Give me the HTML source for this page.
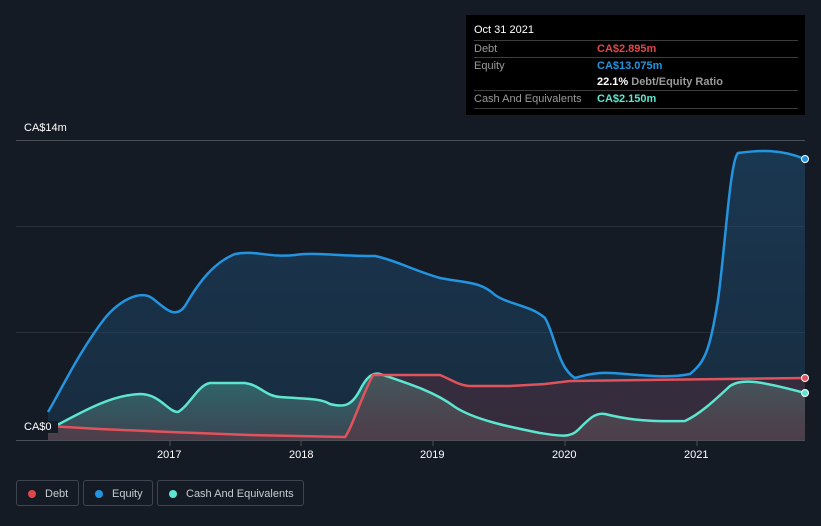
<!DOCTYPE html>
<html><head><meta charset="utf-8"><style>
body{margin:0;background:#151b25;width:821px;height:526px;overflow:hidden;font-family:"Liberation Sans",sans-serif;}
.tt{position:absolute;left:466px;top:15px;width:339px;height:100px;background:#000;}
.tt .h{position:absolute;left:8px;top:9px;color:#fff;font-size:11px;}
.row{position:absolute;left:8px;width:324px;border-top:1px solid #3c3c3c;height:17px;font-size:11px;}
.row span{position:absolute;top:2px;}
.l{left:0;color:#9a9a9a}.v{left:123px;font-weight:bold}
.leg{position:absolute;top:480px;height:26px;border:1px solid #3e4550;border-radius:3px;color:#c8ccd2;font-size:11px;line-height:26px;box-sizing:border-box;}
.leg i{position:absolute;left:11px;top:9px;width:8px;height:8px;border-radius:50%;}
.ax{position:absolute;color:#fff;font-size:11px;}
</style></head><body>
<svg width="821" height="526" style="position:absolute;left:0;top:0">
<defs>
<linearGradient id="ge" x1="0" y1="0" x2="0" y2="1"><stop offset="0" stop-color="#1d4a6e" stop-opacity=".6"/><stop offset="1" stop-color="#1d4a6e" stop-opacity=".35"/></linearGradient>
<linearGradient id="gc" x1="0" y1="0" x2="0" y2="1"><stop offset="0" stop-color="#3fa89a" stop-opacity=".5"/><stop offset="1" stop-color="#777" stop-opacity=".35"/></linearGradient>
</defs>
<line x1="16" y1="140.5" x2="805" y2="140.5" stroke="#4a4f58"/>
<line x1="16" y1="226.5" x2="805" y2="226.5" stroke="#2a2f38"/>
<line x1="16" y1="332.5" x2="805" y2="332.5" stroke="#2a2f38"/>
<path d="M48,412 C60,392 80,350 105,318 C120,300 140,290 152,298 C165,308 175,320 185,306 C200,280 215,262 235,254 C255,250 270,258 295,255 C315,252 335,256 375,256 C395,260 415,271 440,278 C465,283 480,281 495,295 C510,305 530,305 545,318 C555,335 558,368 575,378 C595,372 605,372 625,374 C650,376 670,378 690,374 C705,362 710,350 718,300 C725,250 730,160 738,153 C760,150 780,149 805,159 L805,440 L48,440Z" fill="url(#ge)"/>
<path d="M48,430 C80,413 110,395 140,394 C160,394 168,412 178,412 C190,405 198,385 210,383 L245,383 C260,385 265,396 280,397 C305,399 320,398 330,404 C345,408 352,405 360,390 C366,378 372,372 380,374 C410,384 435,392 455,407 C475,420 510,427 540,433 C560,436 570,438 578,430 C588,420 595,412 605,414 C625,419 645,422 685,421 C700,414 715,400 730,386 C742,378 760,381 805,393 L805,440 L48,440Z" fill="url(#gc)"/>
<path d="M48,426 L100,429 L170,432 L250,435 L345,437 C352,428 360,400 373,375 L440,375 C450,379 460,386 470,386 L510,386 L545,384 L570,381 L805,378 L805,440 L48,440Z" fill="#7a2b35" fill-opacity=".3"/>
<path d="M48,412 C60,392 80,350 105,318 C120,300 140,290 152,298 C165,308 175,320 185,306 C200,280 215,262 235,254 C255,250 270,258 295,255 C315,252 335,256 375,256 C395,260 415,271 440,278 C465,283 480,281 495,295 C510,305 530,305 545,318 C555,335 558,368 575,378 C595,372 605,372 625,374 C650,376 670,378 690,374 C705,362 710,350 718,300 C725,250 730,160 738,153 C760,150 780,149 805,159" fill="none" stroke="#2394df" stroke-width="2.5"/>
<path d="M48,430 C80,413 110,395 140,394 C160,394 168,412 178,412 C190,405 198,385 210,383 L245,383 C260,385 265,396 280,397 C305,399 320,398 330,404 C345,408 352,405 360,390 C366,378 372,372 380,374 C410,384 435,392 455,407 C475,420 510,427 540,433 C560,436 570,438 578,430 C588,420 595,412 605,414 C625,419 645,422 685,421 C700,414 715,400 730,386 C742,378 760,381 805,393" fill="none" stroke="#5de6cf" stroke-width="2.5"/>
<path d="M48,426 L100,429 L170,432 L250,435 L345,437 C352,428 360,400 373,375 L440,375 C450,379 460,386 470,386 L510,386 L545,384 L570,381 L805,378" fill="none" stroke="#e0525c" stroke-width="2.5"/>
<line x1="16" y1="440.5" x2="805" y2="440.5" stroke="#4a4f58"/>
<line x1="170" y1="441" x2="170" y2="446" stroke="#4a4f58"/><line x1="301" y1="441" x2="301" y2="446" stroke="#4a4f58"/><line x1="433" y1="441" x2="433" y2="446" stroke="#4a4f58"/><line x1="565" y1="441" x2="565" y2="446" stroke="#4a4f58"/><line x1="697" y1="441" x2="697" y2="446" stroke="#4a4f58"/>
<circle cx="805" cy="159" r="3.5" fill="#2394df" stroke="#fff" stroke-width="1"/>
<circle cx="805" cy="378" r="3.5" fill="#e0525c" stroke="#fff" stroke-width="1"/>
<circle cx="805" cy="393" r="3.5" fill="#5de6cf" stroke="#fff" stroke-width="1"/>
</svg>
<div class="ax" style="left:24px;top:122px">CA$14m</div>
<div class="ax" style="left:18px;top:421px;background:#151b25;padding:0 6px;">CA$0</div>
<div class="ax" style="left:157px;top:449px">2017</div>
<div class="ax" style="left:289px;top:449px">2018</div>
<div class="ax" style="left:420px;top:449px">2019</div>
<div class="ax" style="left:552px;top:449px">2020</div>
<div class="ax" style="left:684px;top:449px">2021</div>
<div class="tt">
<div class="h">Oct 31 2021</div>
<div class="row" style="top:25px"><span class="l">Debt</span><span class="v" style="color:#e0474c">CA$2.895m</span></div>
<div class="row" style="top:42px"><span class="l">Equity</span><span class="v" style="color:#2394df">CA$13.075m</span></div>
<div class="row" style="top:59px;border-top:none"><span class="v" style="color:#fff">22.1% <b style="color:#9a9a9a">Debt/Equity Ratio</b></span></div>
<div class="row" style="top:75px;border-bottom:1px solid #3c3c3c"><span class="l">Cash And Equivalents</span><span class="v" style="color:#5de6cf">CA$2.150m</span></div>
</div>
<div class="leg" style="left:16px;width:63px;padding-left:28px"><i style="background:#e0474c"></i>Debt</div>
<div class="leg" style="left:83px;width:70px;padding-left:28px"><i style="background:#2394df"></i>Equity</div>
<div class="leg" style="left:157px;width:147px;padding-left:28px"><i style="background:#5de6cf"></i>Cash And Equivalents</div>
</body></html>
